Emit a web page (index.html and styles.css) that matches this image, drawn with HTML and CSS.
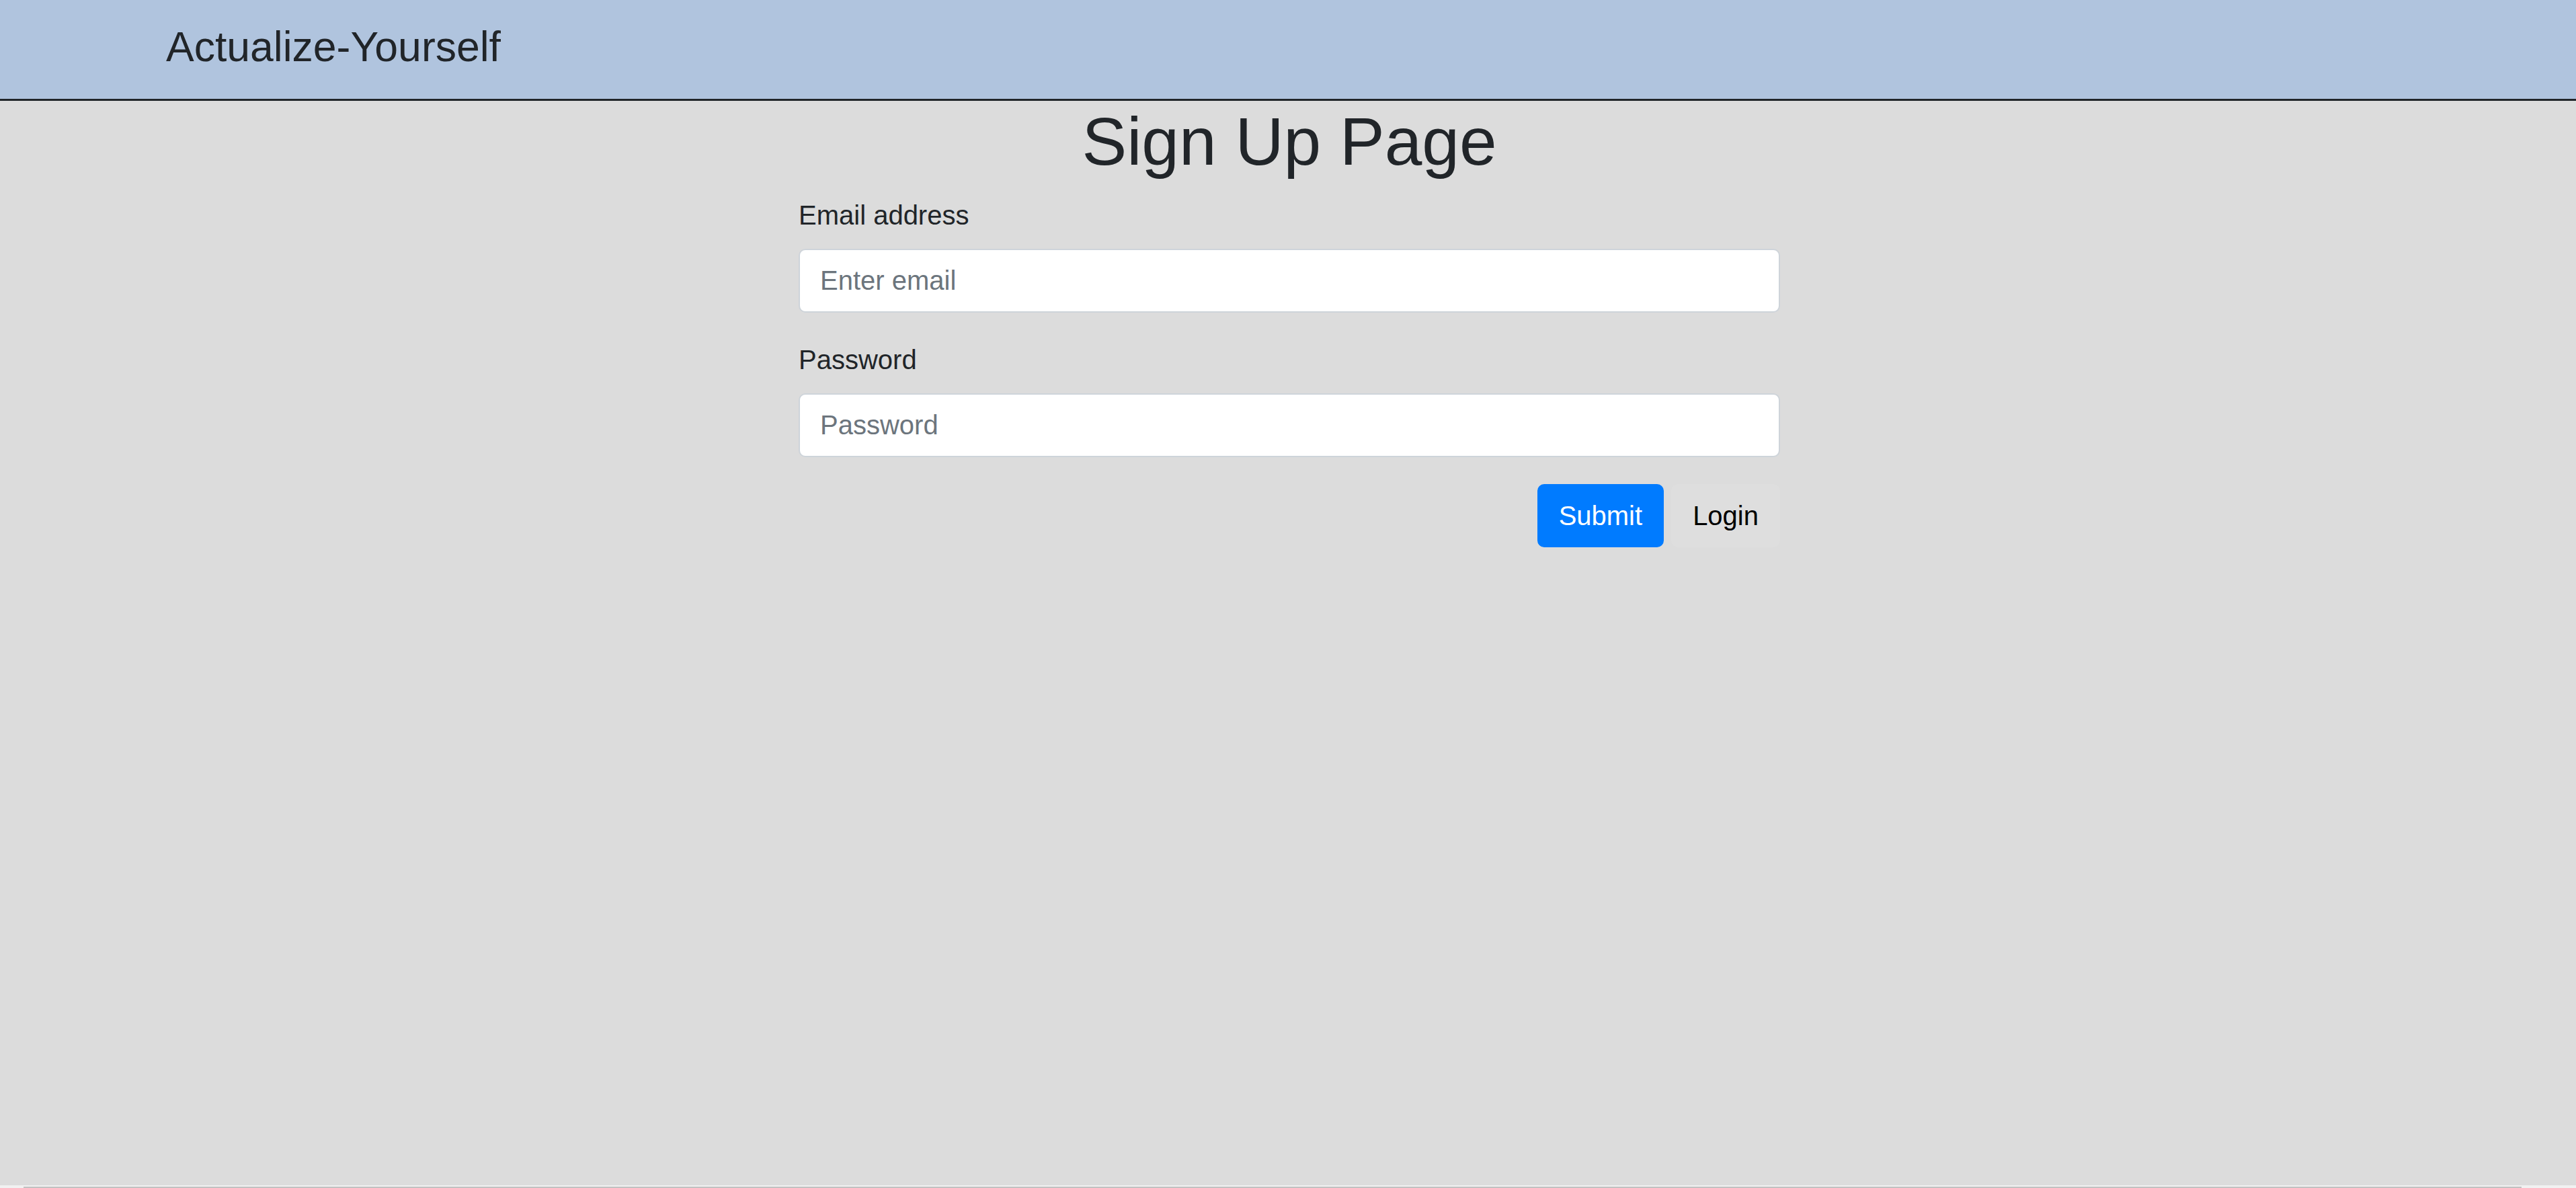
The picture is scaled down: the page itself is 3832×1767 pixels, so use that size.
FILE: index.html
```html
<!DOCTYPE html>
<html lang="en">
<head>
<meta charset="utf-8">
<title>Actualize-Yourself</title>
<link rel="stylesheet" href="styles.css">
</head>
<body>
<div class="page">
  <nav class="navbar">
    <a class="brand" href="#">Actualize-Yourself</a>
  </nav>
  <main class="content">
    <h1 class="title">Sign Up Page</h1>
    <form class="signup">
      <div class="form-group">
        <label class="label" for="email">Email address</label>
        <input class="form-control" id="email" type="email" placeholder="Enter email">
      </div>
      <div class="form-group">
        <label class="label" for="password">Password</label>
        <input class="form-control" id="password" type="password" placeholder="Password">
      </div>
      <div class="actions">
        <button class="btn btn-primary" type="button">Submit</button>
        <button class="btn btn-link" type="button">Login</button>
      </div>
    </form>
  </main>
  <div class="hscroll"><div class="hscroll-thumb"></div></div>
</div>
</body>
</html>
```
FILE: styles.css
```css
html, body {
  margin: 0;
  padding: 0;
  height: 100%;
  overflow: hidden;
}
body {
  background: #dcdcdc;
  color: #212529;
  font-family: "Liberation Sans", Arial, sans-serif;
  font-size: 40px;
  line-height: 1.5;
}
.page {
  height: 1767px;
  display: flex;
  flex-direction: column;
}
.navbar {
  background: #b0c4de;
  height: 147px;
  border-bottom: 3px solid #212529;
  box-sizing: content-box;
  padding: 0 0 0 247px;
  display: flex;
  align-items: flex-start;
}
.brand {
  margin-top: 23px;
  font-size: 62.5px;
  line-height: 1.5;
  color: #212529;
  text-decoration: none;
}
.content {
  flex: 1;
  display: flex;
  flex-direction: column;
  align-items: center;
}
.title {
  margin: 0 0 20px 4px;
  font-size: 100px;
  font-weight: 400;
  line-height: 1.2;
  text-align: center;
}
.signup {
  width: 1460px;
  margin-left: 4px;
}
.form-group {
  margin-bottom: 40px;
}
.label {
  display: inline-block;
  margin-bottom: 20px;
}
.form-control {
  display: block;
  box-sizing: border-box;
  width: 100%;
  height: 95px;
  padding: 15px 30px;
  font-family: inherit;
  font-size: 40px;
  line-height: 1.5;
  color: #495057;
  background: #fff;
  border: 2.5px solid #ced4da;
  border-radius: 10px;
  outline: none;
}
.form-control::placeholder {
  color: #6c757d;
  opacity: 1;
}
.actions {
  display: flex;
  justify-content: flex-end;
  gap: 11px;
}
.btn {
  font-family: inherit;
  font-size: 40px;
  line-height: 1.5;
  padding: 15px 30px;
  border: 2.5px solid transparent;
  border-radius: 10px;
  cursor: pointer;
}
.btn-primary {
  background: #007bff;
  border-color: #007bff;
  color: #fff;
}
.btn-link {
  background: #dedede;
  color: #000;
}
.hscroll {
  height: 4px;
  background: #f1f1f1;
  padding-top: 2px;
  box-sizing: border-box;
}
.hscroll-thumb {
  margin-left: 35px;
  width: 3716px;
  height: 2px;
  background: #c1c1c1;
}
```
